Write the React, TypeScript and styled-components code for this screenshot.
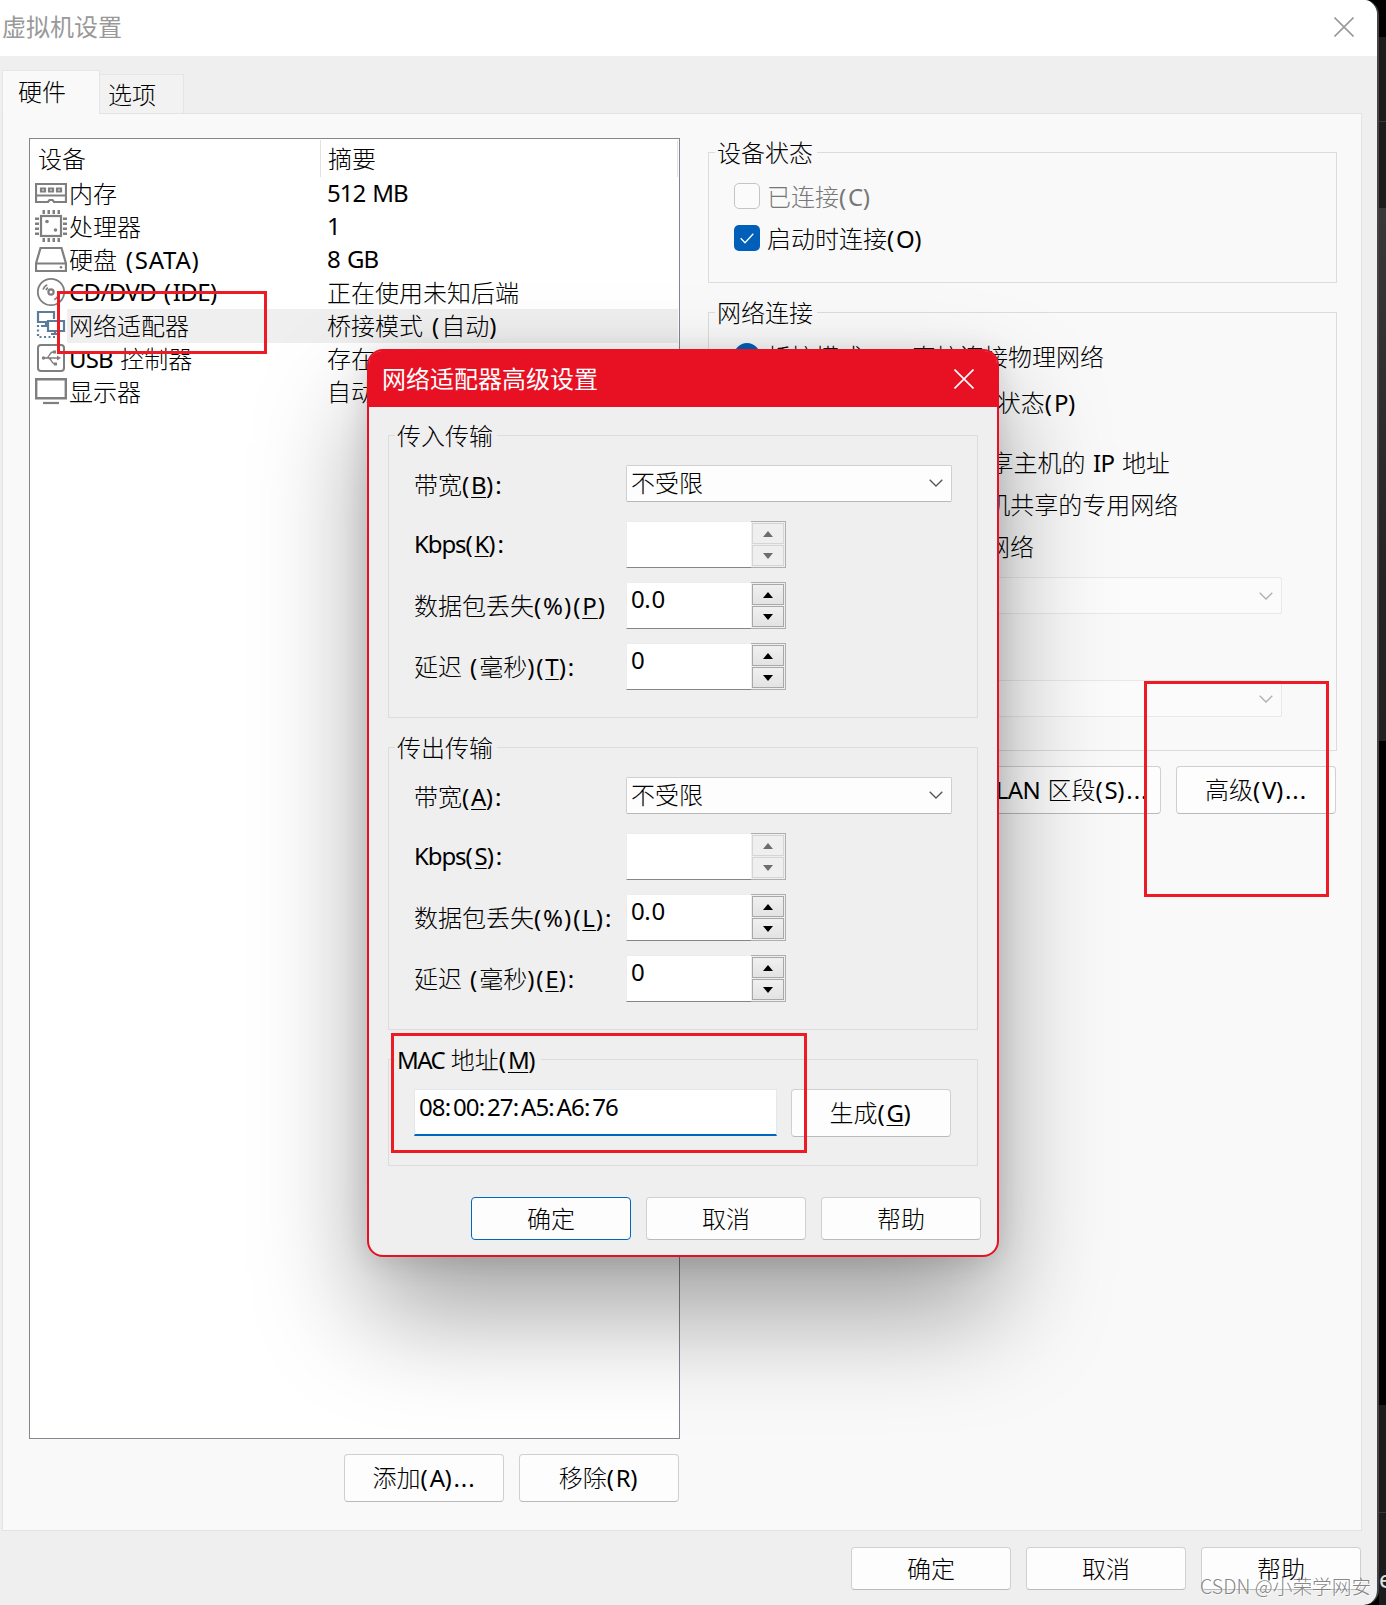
import React from 'react';
import styled, { createGlobalStyle, css } from 'styled-components';

const Global = createGlobalStyle`
  * { box-sizing: border-box; }
  body { margin: 0; background: #000; }
`;

const latin = "'Noto Sans', 'Noto Sans CJK SC', sans-serif";
const cjk = "'Noto Sans CJK SC', sans-serif";

/* ---------- text ---------- */

type Kind = 'cjk' | 'paren' | 'dot' | 'word';

const spacing: Record<Exclude<Kind, 'word'>, number> = { cjk: 0, paren: 1.9, dot: 0.9 };

const Run = styled.span<{ $kind: Kind; $track: number; $mark?: boolean }>`
  font-family: ${p => (p.$kind === 'cjk' ? cjk : latin)};
  font-weight: ${p => (p.$kind === 'cjk' ? 300 : 400)};
  letter-spacing: ${p => (p.$kind === 'word' ? p.$track : spacing[p.$kind])}px;
  word-spacing: 1.8px;
  text-decoration: ${p => (p.$mark ? 'underline' : 'none')};
  text-decoration-thickness: 1px;
  text-underline-offset: 3px;
`;

const Line = styled.span`
  display: inline-block;
  white-space: pre;
  font-family: ${latin};
  font-size: 24px;
  line-height: 33px;
  transform: translateY(-1px);
`;

/* "&X" marks the mnemonic letter of a label */
const Text = ({ children, track = -0.6 }: { children: string; track?: number }) => {
  const parts = children.match(/&[A-Z]|[():]+|\.+|[\u2e80-\uffff]+|[^&():.\u2e80-\uffff]+/g) || [];
  return (
    <Line>
      {parts.map((part, i) => {
        const mark = part[0] === '&';
        const kind: Kind = /[():]/.test(part) ? 'paren' : part[0] === '.' ? 'dot' : /[\u2e80-\uffff]/.test(part) ? 'cjk' : 'word';
        return <Run key={i} $kind={kind} $track={track} $mark={mark}>{mark ? part.slice(1) : part}</Run>;
      })}
    </Line>
  );
};

/* ---------- shell ---------- */

const Desktop = styled.div`
  position: relative;
  display: flex;
  width: 1386px;
  height: 1605px;
  overflow: hidden;
  background: #000;
  color: #000;
`;

const Window = styled.main`
  flex: none;
  display: flex;
  flex-direction: column;
  width: 1379px;
  border-right: 2px solid #444;
  border-radius: 0 15px 15px 0;
  background: #efefef;
  overflow: hidden;
`;

const TitleBar = styled.header`
  flex: none;
  display: flex;
  align-items: center;
  justify-content: space-between;
  height: 56px;
  padding: 0 23px 2px 2px;
  background: #fff;
  color: #999;
`;

const Caption = styled.span`
  padding-bottom: 2px;
  font: 400 24px/34px ${cjk};
`;

const Backdrop = styled.aside`
  flex: 1;
  display: flex;
  flex-direction: column;
  overflow: hidden;
`;

const Slice = styled.div<{ $h: number; $bg: string; $line?: boolean }>`
  flex: none;
  height: ${p => p.$h}px;
  background: ${p => p.$bg};
  border-bottom: ${p => (p.$line ? '1px solid #383838' : '0')};
`;

const BehindText = styled.div`
  padding-top: 50px;
  color: #e0e0e0;
  font: 24px/32px ${latin};
  letter-spacing: -1px;
`;

const Tabs = styled.nav`
  flex: none;
  display: flex;
  align-items: flex-end;
  height: 57px;
  padding-left: 2px;
`;

const Tab = styled.div<{ $active?: boolean }>`
  position: relative;
  border: 1px solid #e5e5e5;
  border-bottom: 0;
  ${p => p.$active
    ? css`width: 98px; height: 44px; margin-bottom: -1px; padding: 4px 0 0 15px; background: #f9f9f9; z-index: 1;`
    : css`width: 84px; height: 39px; padding: 3px 0 0 8px; background: #f2f2f2; border-left: 0;`}
`;

const Panel = styled.section`
  flex: none;
  display: flex;
  align-items: flex-start;
  width: 1360px;
  height: 1418px;
  margin-left: 2px;
  padding: 24px 23px 0 26px;
  border: 1px solid #e3e3e3;
  background: #f9f9f9;
`;

const Footer = styled.footer`
  display: flex;
  justify-content: flex-end;
  gap: 15px;
  padding: 16px 16px 0 0;
`;

/* ---------- shared controls ---------- */

const Button = styled.button<{ $w?: number; $h?: number; $primary?: boolean }>`
  flex: none;
  display: flex;
  align-items: center;
  justify-content: center;
  width: ${p => p.$w ?? 160}px;
  height: ${p => p.$h ?? 48}px;
  padding: 0;
  border: 1px solid ${p => (p.$primary ? '#0067c0' : '#d0d0d0')};
  border-bottom-color: ${p => (p.$primary ? '#0067c0' : '#bababa')};
  border-radius: 4px;
  background: #fdfdfd;
  color: #000;
`;

const Group = styled.fieldset<{ $h: number; $mt?: number }>`
  height: ${p => p.$h}px;
  margin: ${p => p.$mt ?? 0}px 0 0;
  padding: 0;
  border: 1px solid #dcdcdc;
`;

const Legend = styled.legend`
  height: 25px;
  margin-left: 6px;
  padding: 0 4px 0 2px;
  & > span { line-height: 25px; }
`;

const Select = styled.div<{ $w: number; $disabled?: boolean }>`
  display: flex;
  align-items: center;
  justify-content: space-between;
  width: ${p => p.$w}px;
  height: 37px;
  padding: 0 8px 0 4px;
  border: 1px solid ${p => (p.$disabled ? '#e8e8e8' : '#d0d0d0')};
  border-bottom-color: ${p => (p.$disabled ? '#e8e8e8' : '#b8b8b8')};
  border-radius: 2px;
  background: ${p => (p.$disabled ? 'rgba(255,255,255,0.3)' : '#fdfdfd')};
  color: ${p => (p.$disabled ? '#b0b0b0' : '#555')};
  & > span { color: #000; }
`;

const Chevron = () => (
  <svg width="14" height="8" viewBox="0 0 14 8" fill="none" stroke="currentColor" strokeWidth="1.3">
    <path d="M0.7 0.7 7 7 13.3 0.7" />
  </svg>
);

const Cross = () => (
  <svg width="20" height="20" viewBox="0 0 20 20" fill="none" stroke="currentColor" strokeWidth="1.6">
    <path d="M0.5 0.5 19.5 19.5M19.5 0.5 0.5 19.5" />
  </svg>
);

/* ---------- device list ---------- */

const Left = styled.div`
  display: flex;
  flex-direction: column;
  width: 651px;
`;

const List = styled.div`
  width: 651px;
  height: 1301px;
  padding: 1px;
  border: 1px solid #828790;
  background: #fff;
`;

const ListHead = styled.div`
  display: grid;
  grid-template-columns: 290px 357px;
  height: 37px;
  & > div { padding: 2px 0 0 7px; border-right: 1px solid #e2e2e2; }
`;

const Device = styled.div`
  display: grid;
  grid-template-columns: 32px 1fr;
  height: 33px;
  padding-left: 4px;
`;

const DeviceCells = styled.div<{ $selected?: boolean }>`
  display: grid;
  grid-template-columns: 258px 1fr;
  width: 611px;
  padding-left: 2px;
  background: ${p => (p.$selected ? '#efefef' : 'transparent')};
`;

const ListButtons = styled.div`
  display: flex;
  justify-content: flex-end;
  gap: 15px;
  padding: 15px 1px 0 0;
`;

const Icon = styled.svg<{ $tone?: string }>`
  display: block;
  width: 32px;
  height: 33px;
  fill: none;
  stroke: ${p => p.$tone ?? '#7f7f7f'};
  stroke-width: 2.2;
`;

const MemoryIcon = () => (
  <Icon viewBox="0 0 32 33">
    <path d="M1 7h30v18H19l-1.500-2h-3L13 25H1zM1 18.500h30" />
    <path d="M6 11.500h4v3H6zM14 11.500h4v3h-4zM22 11.500h4v3h-4z" />
  </Icon>
);
const CpuIcon = () => (
  <Icon viewBox="0 0 32 33">
    <rect x="6" y="6" width="20" height="20" />
    <path strokeDasharray="2.500 2.500" d="M7.500 2h18M7.500 30h18" strokeWidth="4" />
    <path strokeDasharray="2.500 2.500" d="M2 7.500v18M30 7.500v18" strokeWidth="4" />
    <circle cx="12" cy="11.500" r="1.800" fill="#7f7f7f" stroke="none" />
    <circle cx="20.500" cy="20" r="1.800" fill="#7f7f7f" stroke="none" />
  </Icon>
);
const DiskIcon = () => (
  <Icon viewBox="0 0 32 33">
    <path d="M5.500 5h21L31 20.500V28H1v-7.500zM1 20.500h30" />
    <circle cx="26" cy="24.200" r="1.300" fill="#7f7f7f" stroke="none" />
  </Icon>
);
const DiscIcon = () => (
  <Icon viewBox="0 0 32 33">
    <circle cx="16" cy="16" r="13.200" strokeWidth="1.800" />
    <circle cx="16" cy="16" r="2.600" />
    <path d="M8 13.500c.8-2.300 2-3.700 4.200-4.800M11 14c.5-1 1-1.600 2-2.200M23.500 19c-.8 2.300-2 3.700-4.200 4.800" strokeWidth="1.800" />
  </Icon>
);
const NetIcon = () => (
  <Icon viewBox="0 0 32 33" $tone="#5d7c99">
    <path d="M12 13H3V3h16v7M13 12h16v10H13zM11 13v4M6 17h7M20 22v3M16 25h8" />
    <path d="M3 16v12h17" strokeDasharray="2 2.500" />
  </Icon>
);
const UsbIcon = () => (
  <Icon viewBox="0 0 32 33">
    <rect x="3" y="3" width="26" height="26" rx="3" strokeWidth="2" />
    <path d="M8 16h15M11 16c4 0 3-6 7-6h2M13 16c4 0 3 6 7 6" strokeWidth="1.400" />
    <circle cx="8.500" cy="16" r="1.700" fill="#7f7f7f" stroke="none" />
    <path d="M22 13.500l4 2.500-4 2.500zM18 8.500h3v3h-3zM19 20.500h3v3h-3z" fill="#7f7f7f" stroke="none" />
  </Icon>
);
const DisplayIcon = () => (
  <Icon viewBox="0 0 32 33">
    <path d="M1.200 4.200h29.600v19H1.200z" strokeWidth="2.400" />
    <path d="M8 28h16" />
  </Icon>
);

const devices = [
  { icon: MemoryIcon, name: '内存', summary: '512 MB', summaryTrack: -1 },
  { icon: CpuIcon, name: '处理器', summary: '1' },
  { icon: DiskIcon, name: '硬盘 (SATA)', summary: '8 GB', track: 0.7, summaryTrack: -0.9 },
  { icon: DiscIcon, name: 'CD/DVD (IDE)', summary: '正在使用未知后端' },
  { icon: NetIcon, name: '网络适配器', summary: '桥接模式 (自动)', summaryTrack: 1, selected: true },
  { icon: UsbIcon, name: 'USB 控制器', summary: '存在', track: -0.8 },
  { icon: DisplayIcon, name: '显示器', summary: '自动检测' },
];

/* ---------- right column ---------- */

const Right = styled.div`
  display: flex;
  flex-direction: column;
  width: 629px;
  margin-left: 28px;
  padding-top: 2px;
`;

const StatusBody = styled.div`
  display: flex;
  flex-direction: column;
  gap: 16px;
  padding: 18px 0 0 25px;
`;

const Option = styled.div<{ $mt?: number; $w?: number; $disabled?: boolean }>`
  display: flex;
  align-items: center;
  justify-content: space-between;
  width: ${p => (p.$w ? `${p.$w}px` : 'max-content')};
  gap: 7px;
  height: 26px;
  margin-top: ${p => p.$mt ?? 0}px;
  color: ${p => (p.$disabled ? '#777' : '#000')};
  & > span:last-child { transform: none; }
`;

const Check = styled.span<{ $on?: boolean }>`
  display: grid;
  place-items: center;
  flex: none;
  width: 26px;
  height: 26px;
  border: ${p => (p.$on ? '0' : '1.5px solid #c4c4c4')};
  border-radius: 5px;
  background: ${p => (p.$on ? '#005fb8' : '#fbfbfb')};
`;

const Radio = styled.span<{ $on?: boolean }>`
  flex: none;
  width: 26px;
  height: 26px;
  border: ${p => (p.$on ? '7px solid #005fb8' : '1px solid #888')};
  border-radius: 50%;
  background: #fff;
`;

const NetBody = styled.div`
  display: flex;
  flex-direction: column;
  padding: 18px 0 0 25px;
`;

const SelectSlot = styled.div<{ $mt: number }>`
  margin: ${p => p.$mt}px 0 0 28px;
`;

const ActionRow = styled.div`
  display: flex;
  justify-content: flex-end;
  gap: 15px;
  padding: 15px 1px 0 0;
`;

/* ---------- dialog ---------- */

const Dialog = styled.section`
  position: absolute;
  left: 367px;
  top: 349px;
  width: 632px;
  height: 908px;
  border: 2px solid #e81123;
  border-radius: 16px;
  background: #efefef;
  box-shadow: 0 56px 110px rgba(0, 0, 0, 0.36), 0 4px 28px rgba(0, 0, 0, 0.12);
`;

const DialogTitle = styled.header`
  display: flex;
  align-items: center;
  justify-content: space-between;
  height: 56px;
  padding: 0 23px 0 13px;
  border-radius: 13px 13px 0 0;
  background: #e81123;
  color: #fff;
`;

const DialogBody = styled.div`
  display: flex;
  flex-direction: column;
  gap: 17px;
  padding: 16px 19px 0;
`;

const Fields = styled.div`
  display: flex;
  flex-direction: column;
  gap: 14px;
  padding: 16px 0 0 25px;
`;

const Field = styled.div<{ $select?: boolean }>`
  display: grid;
  grid-template-columns: 212px 1fr;
  align-items: center;
  height: ${p => (p.$select ? 37 : 47)}px;
  margin-bottom: ${p => (p.$select ? 6 : 0)}px;
  & > span { padding-top: ${p => (p.$select ? 4 : 0)}px; }
`;

const Spin = styled.div`
  display: flex;
  width: 160px;
  height: 47px;
`;

const SpinValue = styled.div`
  flex: 1;
  padding: 0 0 0 4px;
  border: 1px solid #ececec;
  border-right: 0;
  border-bottom-color: #868686;
  background: #fff;
`;

const SpinButtons = styled.div`
  display: flex;
  flex-direction: column;
  gap: 1px;
  width: 35px;
  padding: 1px;
  border: 1px solid #adb0b3;
  border-left: 0;
`;

const Step = styled.div<{ $disabled?: boolean }>`
  flex: 1;
  display: grid;
  place-items: center;
  border: 1px solid ${p => (p.$disabled ? '#d5d5d5' : '#a8a8a8')};
  background: ${p => (p.$disabled ? '#efefef' : 'linear-gradient(#f0f0f0, #e3e3e3)')};
  color: ${p => (p.$disabled ? '#6d6d6d' : '#000')};
`;

const Spinner = ({ value, disabled }: { value: string; disabled?: boolean }) => (
  <Spin>
    <SpinValue><Text>{value}</Text></SpinValue>
    <SpinButtons>
      <Step $disabled={disabled}><svg width="10" height="6"><path d="M0 6 5 0l5 6z" fill="currentColor" /></svg></Step>
      <Step $disabled={disabled}><svg width="10" height="6"><path d="M0 0 5 6l5-6z" fill="currentColor" /></svg></Step>
    </SpinButtons>
  </Spin>
);

const TransferGroup = ({ title, keys }: { title: string; keys: string[] }) => (
  <Group $h={295}>
    <Legend><Text>{title}</Text></Legend>
    <Fields>
      <Field $select>
        <Text>{`带宽(&${keys[0]}):`}</Text>
        <Select $w={326}><Text>不受限</Text><Chevron /></Select>
      </Field>
      <Field><Text track={-1.1}>{`Kbps(&${keys[1]}):`}</Text><Spinner value="" disabled /></Field>
      <Field><Text track={1}>{`数据包丢失(%)(&${keys[2]})${keys[2] === 'L' ? ':' : ''}`}</Text><Spinner value="0.0" /></Field>
      <Field><Text track={0}>{`延迟 (毫秒)(&${keys[3]}):`}</Text><Spinner value="0" /></Field>
    </Fields>
  </Group>
);

const MacRow = styled.div`
  display: flex;
  gap: 14px;
  padding: 17px 0 0 25px;
`;

const MacInput = styled.div`
  width: 363px;
  height: 47px;
  padding: 1px 0 0 4px;
  border: 1px solid #e2e8ee;
  border-bottom: 2px solid #0067c0;
  background: #fff;
`;

const DialogFooter = styled.footer`
  display: flex;
  justify-content: flex-end;
  gap: 15px;
  padding: 31px 16px 0 0;
`;

/* ---------- overlays ---------- */

const Mark = styled.div<{ $x: number; $y: number; $w: number; $h: number }>`
  position: absolute;
  left: ${p => p.$x}px;
  top: ${p => p.$y}px;
  width: ${p => p.$w}px;
  height: ${p => p.$h}px;
  border: 3px solid #ed1c24;
`;

const Watermark = styled.div`
  position: absolute;
  left: 1200px;
  top: 1572px;
  color: rgba(120, 120, 120, 0.9);
  font: 300 19.700px/28px ${cjk};
  white-space: nowrap;
  text-shadow: 1px 1px 0 rgba(255, 255, 255, 0.7);
`;

export default function App() {
  return (
    <>
      <Global />
      <Desktop>
        <Window>
          <TitleBar><Caption>虚拟机设置</Caption><Cross /></TitleBar>
          <Tabs>
            <Tab $active><Text>硬件</Text></Tab>
            <Tab><Text>选项</Text></Tab>
          </Tabs>
          <Panel>
            <Left>
              <List>
                <ListHead>
                  <div><Text>设备</Text></div>
                  <div><Text>摘要</Text></div>
                </ListHead>
                {devices.map(({ icon: DeviceIcon, name, summary, track, summaryTrack, selected }) => (
                  <Device key={name}>
                    <DeviceIcon />
                    <DeviceCells $selected={selected}>
                      <Text track={track}>{name}</Text>
                      <Text track={summaryTrack}>{summary}</Text>
                    </DeviceCells>
                  </Device>
                ))}
              </List>
              <ListButtons>
                <Button><Text>添加(A)...</Text></Button>
                <Button><Text>移除(R)</Text></Button>
              </ListButtons>
            </Left>
            <Right>
              <Group $h={143}>
                <Legend><Text>设备状态</Text></Legend>
                <StatusBody>
                  <Option $disabled><Check /><Text>已连接(C)</Text></Option>
                  <Option>
                    <Check $on>
                      <svg width="14" height="11" fill="none" stroke="#fff" strokeWidth="1.3"><path d="M0.700 5.200 5 9.700 13.300 0.700" /></svg>
                    </Check>
                    <Text>启动时连接(O)</Text>
                  </Option>
                </StatusBody>
              </Group>
              <Group $h={451} $mt={17}>
                <Legend><Text>网络连接</Text></Legend>
                <NetBody>
                  <Option $w={366}><Radio $on /><Text>桥接模式(B): 直接连接物理网络</Text></Option>
                  <Option $w={343} $mt={20}><Check /><Text>复制物理网络连接状态(P)</Text></Option>
                  <Option $w={435} $mt={34}><Radio /><Text>NAT 模式(N): 用于共享主机的 IP 地址</Text></Option>
                  <Option $w={439} $mt={16}><Radio /><Text>仅主机模式(H): 与主机共享的专用网络</Text></Option>
                  <Option $w={296} $mt={16}><Radio /><Text>自定义(U): 特定虚拟网络</Text></Option>
                  <SelectSlot $mt={18}><Select $w={520} $disabled><span /><Chevron /></Select></SelectSlot>
                  <SelectSlot $mt={66}><Select $w={520} $disabled><span /><Chevron /></Select></SelectSlot>
                </NetBody>
              </Group>
              <ActionRow>
                <Button $w={178}><Text>LAN 区段(S)...</Text></Button>
                <Button><Text>高级(V)...</Text></Button>
              </ActionRow>
            </Right>
          </Panel>
          <Footer>
            <Button $h={43}><Text>确定</Text></Button>
            <Button $h={43}><Text>取消</Text></Button>
            <Button $h={43}><Text>帮助</Text></Button>
          </Footer>
        </Window>
        <Backdrop>
          <Slice $h={37} $bg="#000" />
          <Slice $h={85} $bg="#1c1c1c" $line />
          <Slice $h={86} $bg="#1c1c1c" />
          <Slice $h={533} $bg="linear-gradient(#383838, #242424 70%, #222)" />
          <Slice $h={664} $bg="#000" />
          <Slice $h={108} $bg="#1c1c1c" $line />
          <Slice $h={92} $bg="#1c1c1c"><BehindText>e</BehindText></Slice>
        </Backdrop>
        <Dialog>
          <DialogTitle><Caption>网络适配器高级设置</Caption><Cross /></DialogTitle>
          <DialogBody>
            <TransferGroup title="传入传输" keys={['B', 'K', 'P', 'T']} />
            <TransferGroup title="传出传输" keys={['A', 'S', 'L', 'E']} />
            <Group $h={119}>
              <Legend><Text track={-1.5}>MAC 地址(&M)</Text></Legend>
              <MacRow>
                <MacInput><Text track={-0.9}>08:00:27:A5:A6:76</Text></MacInput>
                <Button><Text>生成(&G)</Text></Button>
              </MacRow>
            </Group>
          </DialogBody>
          <DialogFooter>
            <Button $h={43} $primary><Text>确定</Text></Button>
            <Button $h={43}><Text>取消</Text></Button>
            <Button $h={43}><Text>帮助</Text></Button>
          </DialogFooter>
        </Dialog>
        <Mark $x={57} $y={291} $w={210} $h={63} />
        <Mark $x={1144} $y={681} $w={185} $h={216} />
        <Mark $x={391} $y={1033} $w={416} $h={120} />
        <Watermark>CSDN @小荣学网安</Watermark>
      </Desktop>
    </>
  );
}
